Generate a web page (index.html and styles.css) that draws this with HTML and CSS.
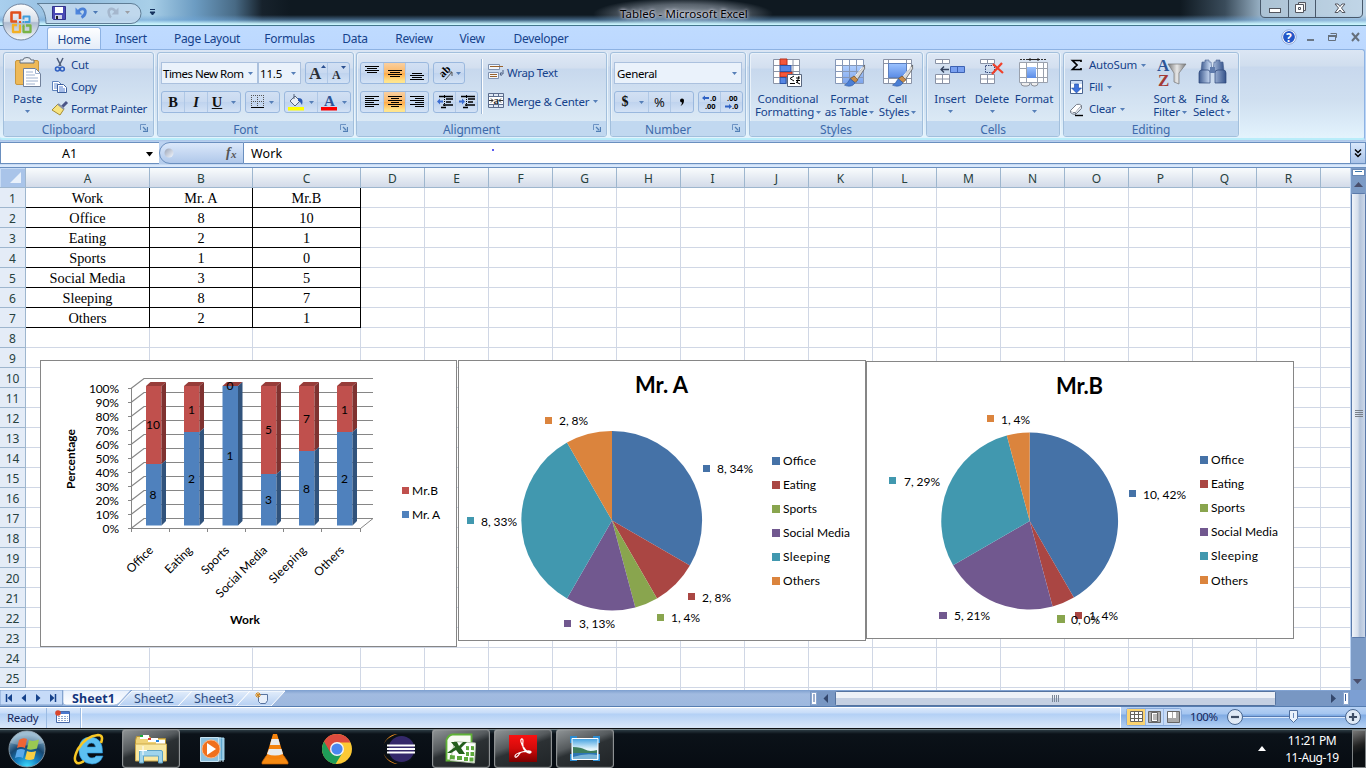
FILE: index.html
```html
<!DOCTYPE html>
<html lang="en">
<head>
<meta charset="utf-8">
<title>Table6 - Microsoft Excel</title>
<link rel="stylesheet" href="styles.css">
</head>
<body>
<svg width="0" height="0" class="defs">
  <defs>
    <linearGradient id="orb" x1="0" y1="0" x2="0" y2="1"><stop offset="0" stop-color="#fff"/><stop offset=".48" stop-color="#d5dde8"/><stop offset=".52" stop-color="#aebbd0"/><stop offset="1" stop-color="#f8fafc"/></linearGradient>
    <radialGradient id="start" cx=".5" cy="1" r=".9"><stop offset="0" stop-color="#3fe0ff"/><stop offset=".35" stop-color="#1682c4"/><stop offset=".65" stop-color="#174770"/><stop offset="1" stop-color="#7fa9c4"/></radialGradient>
    <linearGradient id="hole" x1="0" y1="0" x2="1" y2="1"><stop offset="0" stop-color="#9aa3b5"/><stop offset="1" stop-color="#f4f8ff"/></linearGradient>
    <linearGradient id="blue3" x1="0" y1="0" x2="0" y2="1"><stop offset="0" stop-color="#9cc3ff"/><stop offset="1" stop-color="#5b8ce6"/></linearGradient>
    <linearGradient id="metal" x1="0" y1="0" x2="1" y2="0"><stop offset="0" stop-color="#777"/><stop offset=".5" stop-color="#e8e8e8"/><stop offset="1" stop-color="#777"/></linearGradient>
    <linearGradient id="bino" x1="0" y1="0" x2="1" y2="0"><stop offset="0" stop-color="#3e5b8f"/><stop offset=".4" stop-color="#c6d8f2"/><stop offset="1" stop-color="#34528a"/></linearGradient>
    <linearGradient id="thumb" x1="0" y1="0" x2="1" y2="0"><stop offset="0" stop-color="#f2f5fa"/><stop offset=".45" stop-color="#d5deeb"/><stop offset=".6" stop-color="#b4c4db"/><stop offset="1" stop-color="#cfdaea"/></linearGradient>
    <linearGradient id="pdf" x1="0" y1="0" x2="0" y2="1"><stop offset="0" stop-color="#f81212"/><stop offset=".5" stop-color="#d30a0a"/><stop offset="1" stop-color="#7d0000"/></linearGradient>
    <linearGradient id="sky" x1="0" y1="0" x2="0" y2="1"><stop offset="0" stop-color="#3f9fe0"/><stop offset=".5" stop-color="#e2f4fb"/></linearGradient>
    <linearGradient id="tabw" x1="0" y1="0" x2="0" y2="1"><stop offset="0" stop-color="#e8f0fc"/><stop offset="1" stop-color="#fff"/></linearGradient>
    <linearGradient id="tabb" x1="0" y1="0" x2="0" y2="1"><stop offset="0" stop-color="#e2edfb"/><stop offset="1" stop-color="#b5cff2"/></linearGradient>
    <symbol id="dd" viewBox="0 0 5 3"><path d="M0 0h5L2.500 3z"/></symbol>
    <symbol id="launch" viewBox="0 0 8 8"><path d="M.5 6V.5H6" fill="none" stroke="#6d93c4"/><path d="M3 3l3 3M7.500 3v4.500H3" fill="none" stroke="#527fb5" stroke-width="1.300"/></symbol>
    <symbol id="brush" viewBox="0 0 22 24"><path d="M21 1L10 14l3 3L21 5z" fill="#d9d9d9" stroke="#555" stroke-width=".8"/><path d="M19 3L11 13" stroke="#fff"/><path d="M10 12.500l4 4-3 3-5-4z" fill="#c98d4b" stroke="#6b4a20" stroke-width=".7"/><path d="M6 15.500l5 4c-2 4-7 4.500-11 2.500 3-1 4-4 6-6.500z" fill="#4c7fd4" stroke="#2d579f" stroke-width=".6"/></symbol>
  </defs>
</svg>

<div class="window">
  <header class="titlebar">
    <svg class="qat" width="170" height="25" viewBox="0 0 170 25">
      <path d="M37 3.500H131a10 10 0 0 1 0 20H46C46 13 42 6 37 3.500z" fill="#c9dcef" fill-opacity=".75" stroke="#5f7d96"/>
      <path d="M52.500 6.500h13v13h-12l-1-1z" fill="#4a49b5" stroke="#33338c"/><path d="M55 7h8v6h-8z" fill="#fff"/><path d="M55 15h7v4h-7z" fill="#cfd2e8"/><path d="M56 16h2v3h-2z" fill="#222"/>
      <path d="M75.500 7.500v7h7z" fill="#4f86dd"/><path d="M78 12c3-5 8-3.500 7.300.500-.3 2.500-2 4-3.800 5" fill="none" stroke="#4b80d6" stroke-width="2.800"/>
      <path d="M118.500 7.500v7h-7z" fill="#a5b7cd"/><path d="M116 12c-3-5-8-3.500-7.300.500.3 2.500 1 4 2.300 5" fill="none" stroke="#a5b7cd" stroke-width="2.600"/>
      <path d="M93 11h5l-2.500 3z" fill="#4d79b5"/><path d="M125 11h5l-2.500 3z" fill="#9c9ea4"/>
      <path d="M150 9.500h5M150 12h5l-2.500 3z" stroke="#16335e" fill="#16335e"/>
    </svg>
    <h1 class="caption">Table6 - Microsoft Excel</h1>
    <svg class="winbtns" width="106" height="19" viewBox="0 0 106 19">
      <path d="M.5 0v13q0 4.500 4.500 4.500h93q4.500 0 4.500-4.500V0M28.500 0v17M55.500 0v17" fill="#cbdcea" fill-opacity=".35" stroke="#48586a"/>
      <rect x="9.500" y="8.500" width="11" height="4" fill="#fff" stroke="#52555e"/>
      <path d="M38.500 2.500h7v8h-7z" fill="#eee" stroke="#52555e"/><path d="M35.500 4.500h8v8h-8zM38.500 7.500h2v2h-2z" fill="#fff" stroke="#52555e"/>
      <path d="M75 4h3l2 2.500L82 4h3l-3.500 4L85 12.500h-3L80 10l-2 2.500h-3L78.500 8z" fill="#fff" stroke="#52555e"/>
    </svg>
    <svg class="office" width="38" height="38" viewBox="2 3 38 38">
      <circle cx="21" cy="22" r="18" fill="url(#orb)" stroke="#72859f"/>
      <g fill="none" stroke-width="2.600" stroke-linejoin="round"><path d="M20 19v-6.500h-8.500v9H17" stroke="#e0501c"/><path d="M23.500 19.500v-3h6v5.500H25" stroke="#3f9ddb" stroke-width="2"/><path d="M20 26v6h-7v-7h4" stroke="#f3b024" stroke-width="2.300"/><path d="M23.500 26v6h7v-6.500H26" stroke="#79b446" stroke-width="2.300"/></g>
      <path d="M19 21h2v2h-2z" fill="#e0501c"/><path d="M22.500 21h2v2h-2z" fill="#3f9ddb"/><path d="M19 24.500h2v2h-2z" fill="#f3b024"/><path d="M22.500 24.500h2v2h-2z" fill="#79b446"/>
    </svg>
  </header>

  <nav class="tabs">
    <span class="tab t-home">Home</span><span class="tab t-ins">Insert</span><span class="tab t-page">Page Layout</span><span class="tab t-form">Formulas</span><span class="tab t-data">Data</span><span class="tab t-rev">Review</span><span class="tab t-view">View</span><span class="tab t-dev">Developer</span>
    <svg class="docbtns" width="84" height="20" viewBox="1282 28 84 20">
      <circle cx="1289" cy="37" r="6.500" fill="#2456c8" stroke="#fff" stroke-width="1.200"/><circle cx="1289" cy="37" r="7.200" fill="none" stroke="#6e86bd" stroke-width=".6"/><text x="1286" y="41.500" class="helpq">?</text>
      <path d="M1307 40h7" stroke="#6b7785" stroke-width="2"/><path d="M1330.500 33.500h6v4h-1M1328.500 35.500h7v5h-7z" fill="none" stroke="#66707c"/><path d="M1328 36h8" stroke="#66707c" stroke-width="2"/>
      <path d="M1352 33l7 8M1359 33l-7 8" stroke="#66707c" stroke-width="2"/>
    </svg>
  </nav>

  <section class="ribbon">
    <div class="group g-clip">
      <div class="body">
        <div class="big paste">
          <svg width="28" height="31" viewBox="14 56 28 31"><rect x="15.500" y="60.500" width="23" height="24" rx="1.500" fill="#eeb958" stroke="#c9973e"/><path d="M20 63v-3h3q0-2.500 4-2.500t4 2.500h3v3z" fill="#e7ebf0" stroke="#65707e"/><path d="M23.500 68.500h12l5 5v13h-17z" fill="#fff" stroke="#71819b"/><path d="M35.500 68.500v5h5M26 72h7M26 75h9M26 78h12M26 81h12M26 84h9" fill="none" stroke="#9fb2cf"/></svg>
          <span>Paste</span><svg class="dd" width="5" height="3"><use href="#dd"/></svg>
        </div>
        <div class="stack">
          <div class="cmd"><svg width="16" height="16" viewBox="52 57 16 16"><path d="M57 58l4 8M63 58l-4 8" stroke="#4d5c78" stroke-width="1.500"/><circle cx="57.500" cy="69" r="2" fill="none" stroke="#2f5fc0" stroke-width="1.600"/><circle cx="62.300" cy="69" r="2" fill="none" stroke="#2f5fc0" stroke-width="1.600"/></svg><span>Cut</span></div>
          <div class="cmd"><svg width="16" height="16" viewBox="52 79 16 16"><path d="M52.500 81.500h6l3 3v6h-9z" fill="#fff" stroke="#5d82bd"/><path d="M54 84h4M54 86h5M54 88h4" stroke="#6a92d4"/><path d="M57.500 84.500h6l3 3v5h-9z" fill="#fff" stroke="#3c5f9d"/><path d="M59 87h4M59 89h6M59 91h6" stroke="#4c7ad0"/></svg><span>Copy</span></div>
          <div class="cmd"><svg width="16" height="16" viewBox="52 101 16 16"><path d="M67 102l-6 6" stroke="#4a5587" stroke-width="3"/><path d="M58 104l6 5-4 6-8-5z" fill="#f7e480" stroke="#a78d32"/><path d="M58 104l6 5" stroke="#8992a8" stroke-width="2"/></svg><span>Format Painter</span></div>
        </div>
      </div>
      <footer><span>Clipboard</span><svg class="la" width="8" height="8"><use href="#launch"/></svg></footer>
    </div>

    <div class="group g-font">
      <div class="body rows">
        <div class="row">
          <div class="combo c-font">Times New Rom<svg class="dd" width="5" height="3"><use href="#dd"/></svg></div><div class="combo c-size">11.5<svg class="dd" width="5" height="3"><use href="#dd"/></svg></div>
          <div class="seg s-grow"><i><svg width="20" height="20" viewBox="0 0 20 20"><text x="2" y="16" class="serif b16">A</text><path d="M14 5l2.500-3L19 5z" fill="#2a4f90"/></svg></i><i><svg width="20" height="20" viewBox="0 0 20 20"><text x="3" y="16" class="serif b12">A</text><path d="M12 3h5l-2.500 3z" fill="#2a4f90"/></svg></i></div>
        </div>
        <div class="row">
          <div class="seg s-biu"><i class="serif bold">B</i><i class="serif ital">I</i><i class="serif"><u>U</u><svg class="dd" width="5" height="3"><use href="#dd"/></svg></i></div>
          <div class="seg s-bord"><i><svg width="14" height="14" viewBox="0 0 14 14"><path d="M.5 0v11M6.500 0v11M12.500 0v11M0 .5h13M0 6.500h13" fill="none" stroke="#555" stroke-dasharray="1 1"/><path d="M0 12.500h13" stroke="#000"/></svg><svg class="dd" width="5" height="3"><use href="#dd"/></svg></i></div>
          <div class="seg s-col">
            <i><svg width="17" height="17" viewBox="0 0 17 17"><path d="M2 7l5-5 5 5-5 5z" fill="#e9eef6" stroke="#56657e"/><path d="M6 0v5" stroke="#56657e"/><path d="M10 4c5 0 5 3 4 7-2-3-2-4-4-4z" fill="#2c59b0"/><path d="M0 13h16v3.500H0z" fill="#ff0"/></svg><svg class="dd" width="5" height="3"><use href="#dd"/></svg></i>
            <i><svg width="17" height="17" viewBox="0 0 17 17"><text x="3" y="12" class="serif b15 blue">A</text><path d="M0 13h16v3.500H0z" fill="#f00"/></svg><svg class="dd" width="5" height="3"><use href="#dd"/></svg></i>
          </div>
        </div>
      </div>
      <footer><span>Font</span><svg class="la" width="8" height="8"><use href="#launch"/></svg></footer>
    </div>

    <div class="group g-align">
      <div class="body">
        <div class="alignl">
          <div class="row">
            <div class="seg s-3"><i><svg width="14" height="14"><path d="M0 .5h14M2 2.500h10M0 4.500h14M2 6.500h10" stroke="#000"/></svg></i><i class="on"><svg width="14" height="14"><path d="M0 4.500h14M2 6.500h10M0 8.500h14M2 10.500h10" stroke="#000"/></svg></i><i><svg width="14" height="14"><path d="M2 7.500h10M0 9.500h14M2 11.500h10M0 13.500h14" stroke="#000"/></svg></i></div>
            <div class="seg s-ori"><i><svg width="17" height="16" viewBox="0 0 17 16"><text transform="translate(5 13) rotate(-45)" class="ori">ab</text><path d="M7 15l7-8m-4 0h4v4" stroke="#555" fill="none"/></svg><svg class="dd" width="5" height="3"><use href="#dd"/></svg></i></div>
          </div>
          <div class="row">
            <div class="seg s-3"><i><svg width="14" height="14"><path d="M0 1.500h14M0 3.500h9M0 5.500h14M0 7.500h9M0 9.500h14M0 11.500h9" stroke="#000"/></svg></i><i class="on"><svg width="14" height="14"><path d="M0 1.500h14M3 3.500h8M0 5.500h14M3 7.500h8M0 9.500h14M3 11.500h8" stroke="#000"/></svg></i><i><svg width="14" height="14"><path d="M0 1.500h14M5 3.500h9M0 5.500h14M5 7.500h9M0 9.500h14M5 11.500h9" stroke="#000"/></svg></i></div>
            <div class="seg s-2"><i><svg width="16" height="14"><path d="M2 1.500h14M9 4h7M9 7h5M6 10h10M4 12.500h5" stroke="#000" stroke-width="1.400"/><path d="M7.500 0v14" stroke="#000" stroke-dasharray="1 1"/><path d="M0 6.500l3-3v2h3v2H3v2z" fill="#3c6cd0"/></svg></i><i><svg width="16" height="14"><path d="M2 1.500h14M9 4h7M9 7h5M6 10h10M4 12.500h5" stroke="#000" stroke-width="1.400"/><path d="M7.500 0v14" stroke="#000" stroke-dasharray="1 1"/><path d="M6 6.500l-3-3v2H0v2h3v2z" fill="#3c6cd0"/></svg></i></div>
          </div>
        </div>
        <div class="sep"></div>
        <div class="alignr">
          <div class="cmd"><svg width="16" height="16" viewBox="0 0 16 16"><path d="M.5.5h11v5H.5zM.5 8.500h10v6H.5z" fill="#f3f6fb" stroke="#8193b0"/><path d="M2 2.500h13M2 10.500h7M2 12.500h7" stroke="#99622b"/><path d="M15 6v4h-3m1.500-2L12 10l1.500 2" fill="none" stroke="#4a5c80"/></svg><span>Wrap Text</span></div>
          <div class="cmd"><svg width="16" height="16" viewBox="0 0 16 16"><path d="M.5.5h15v14H.5zM5.500.5v3M10.500.5v3M5.500 11.500v3M10.500 11.500v3M0 3.500h16M0 11.500h16" fill="#dfe8f5" stroke="#5c6d8d"/><path d="M1 4h14v7H1z" fill="#fff"/><text x="5.500" y="10.500" class="serif b11">a</text><path d="M1 7.500h4M3 5.500l2 2-2 2M15 7.500h-4M13 5.500l-2 2 2 2" fill="none" stroke="#333"/></svg><span class="merge">Merge &amp; Center</span><svg class="dd" width="5" height="3"><use href="#dd"/></svg></div>
        </div>
      </div>
      <footer><span>Alignment</span><svg class="la" width="8" height="8"><use href="#launch"/></svg></footer>
    </div>

    <div class="group g-num">
      <div class="body rows">
        <div class="row"><div class="combo c-gen">General<svg class="dd" width="5" height="3"><use href="#dd"/></svg></div></div>
        <div class="row">
          <div class="seg s-cur"><i class="dollar">$<svg class="dd" width="5" height="3"><use href="#dd"/></svg></i><i class="pct">%</i><i class="comma"><svg width="6" height="9"><path d="M1 2.500a2 2 0 0 1 4 0Q5 6 1.500 8q1.500-2 1.500-3.500-2 0-2-2z"/></svg></i></div>
          <div class="seg s-dec"><i><svg width="18" height="18" viewBox="0 0 18 18"><path d="M1 5l3-2.500V4h4v2H4v1.500z" fill="#2f62c4"/><text x="9" y="8" class="dec">.0</text><text x="4" y="16" class="dec">.00</text></svg></i><i><svg width="18" height="18" viewBox="0 0 18 18"><path d="M9 13.500L6 11v1.500H2v2h4V16z" fill="#2f62c4"/><text x="4" y="8" class="dec">.00</text><text x="9" y="16" class="dec">.0</text></svg></i></div>
        </div>
      </div>
      <footer><span>Number</span><svg class="la" width="8" height="8"><use href="#launch"/></svg></footer>
    </div>

    <div class="group g-styles">
      <div class="body bigs">
        <div class="big w76"><svg width="32" height="30" viewBox="0 0 32 30"><path d="M1.500 1.500h26v24h-26zM1 7.500h27M1 13.500h27M1 19.500h27M8.500 1v25M14.500 1v25M21 1v25" fill="#fff" stroke="#8a93a6"/><path d="M8 1h7v6H8zM8 14h12v5H8z" fill="#f4573b" stroke="#b8301c"/><path d="M8 7.500h11v6H8zM8 19.500h6v6H8z" fill="#5687e5" stroke="#2b55ab"/><path d="M15.500 16.500h14v12h-14z" fill="#fff" stroke="#59677f"/><path d="M22 18l-4 2.500 4 2.500M18 25.500h5M24 20h4M24 22.500h4M27 18l-2 7M24 24l4 2" fill="none" stroke="#000"/></svg><span>Conditional<br>Formatting <svg class="dd" width="5" height="3"><use href="#dd"/></svg></span></div>
        <div class="big w56"><svg width="32" height="30" viewBox="0 0 32 30"><path d="M1.500 1.500h28v24h-28z" fill="#fff"/><path d="M8.500 7.500h21v18h-21z" fill="url(#blue3)" fill-opacity=".8"/><path d="M1.500 1.500h28v24h-28zM1 7.500h29M1 13.500h29M1 19.500h29M8.500 1v25M15.500 1v25M22.500 1v25" fill="none" stroke="#8698b8"/><use href="#brush" x="10" y="6" width="22" height="23"/></svg><span>Format<br>as Table <svg class="dd" width="5" height="3"><use href="#dd"/></svg></span></div>
        <div class="big w42"><svg width="32" height="30" viewBox="0 0 32 30"><path d="M1.500 1.500h28v24h-28zM1 5.500h29M1 20.500h29M6.500 1v25M24.500 1v25" fill="#fff" stroke="#8a93a6"/><path d="M6.500 5.500h18v14h-18z" fill="url(#blue3)" stroke="#5b7fc0"/><use href="#brush" x="10" y="6" width="22" height="23"/></svg><span>Cell<br>Styles <svg class="dd" width="5" height="3"><use href="#dd"/></svg></span></div>
      </div>
      <footer><span>Styles</span></footer>
    </div>

    <div class="group g-cells">
      <div class="body bigs">
        <div class="big w42"><svg width="32" height="30" viewBox="0 0 32 30"><path d="M1.500 1.500h14v4h-14zM8.500 1v4.500M1.500 16.500h14v9h-14zM8.500 16.500v9M1 21h15" fill="#fff" stroke="#8a93a6"/><path d="M16.500 8.500h14v6h-14zM23.500 8.500v6" fill="#79a0f0" stroke="#3d62b3"/><path d="M15 11.500H7M10 8.500l-3 3 3 3" fill="none" stroke="#33415c" stroke-width="1.300"/></svg><span>Insert</span><svg class="dd" width="5" height="3"><use href="#dd"/></svg></div>
        <div class="big w42"><svg width="32" height="30" viewBox="0 0 32 30"><path d="M4.500 1.500h14v4h-14zM11.500 1v4.500M4.500 16.500h14v9h-14zM11.500 16.500v9M4 21h15" fill="#fff" stroke="#8a93a6"/><path d="M9.500 7.500h9v7h-9z" fill="none" stroke="#35487a" stroke-dasharray="1.500 1"/><path d="M17 6l10 9M26 5L16 16" stroke="#f0412a" stroke-width="2.200"/></svg><span>Delete</span><svg class="dd" width="5" height="3"><use href="#dd"/></svg></div>
        <div class="big w42"><svg width="32" height="30" viewBox="0 0 32 30"><path d="M2 1.500h26" stroke="#333" stroke-dasharray="2 1"/><path d="M10 1.500h12M12 0v3M20 0v3" stroke="#222"/><path d="M1.500 4.500h28v20h-28zM1 10.500h29M1 19.500h29M8.500 5v19M19.500 5v19M25.500 5v19" fill="#fff" stroke="#9aa1ad"/><path d="M9 9h9v11H9z" fill="url(#blue3)"/><path d="M3 25q0 3 3 3h3q3 0 3-3M13 25q0 3 3 3h1q3 0 3-3" fill="#eee" stroke="#8b8f98"/></svg><span>Format</span><svg class="dd" width="5" height="3"><use href="#dd"/></svg></div>
      </div>
      <footer><span>Cells</span></footer>
    </div>

    <div class="group g-edit">
      <div class="body">
        <div class="stack">
          <div class="cmd"><svg width="16" height="16"><path d="M12 5V3.500H3.500L8 8l-4.500 4.500H12V11" fill="none" stroke="#000" stroke-width="1.700"/></svg><span>AutoSum</span><svg class="dd" width="5" height="3"><use href="#dd"/></svg></div>
          <div class="cmd"><svg width="16" height="16"><path d="M1.500 1.500h12v13h-12z" fill="#fff" stroke="#47628f"/><path d="M2 2h11v3H2z" fill="#cbdcf4"/><path d="M5.500 5h4v4h3l-5 5-5-5h3z" fill="#3c71dc" stroke="#1d4aa3" stroke-width=".6"/></svg><span>Fill</span><svg class="dd" width="5" height="3"><use href="#dd"/></svg></div>
          <div class="cmd"><svg width="16" height="16"><path d="M1.500 9.500l6-6q3-1 5 1l-6 7q-3 1-5-2z" fill="#fff" stroke="#777f8c"/><path d="M12.500 4.500v3l-6 6v-2M1.500 9.500v2q2 2 5 2" fill="#dfe3ea" stroke="#777f8c"/><path d="M6 14.500h8" stroke="#000" stroke-width="1.400"/></svg><span>Clear</span><svg class="dd" width="5" height="3"><use href="#dd"/></svg></div>
        </div>
        <div class="big w42 sort"><svg width="32" height="30" viewBox="0 0 32 30"><text x="3" y="13" class="serif az blue">A</text><text x="4" y="28" class="serif az red">Z</text><path d="M14 6h18l-7 9v11l-5-2v-9z" fill="url(#metal)" stroke="#777" stroke-width=".7"/></svg><span>Sort &amp;<br>Filter <svg class="dd" width="5" height="3"><use href="#dd"/></svg></span></div>
        <div class="big w42 find"><svg width="32" height="30" viewBox="0 0 32 30"><path d="M6 4h3V2h4v2h2l1 9H5zM18 4h2V2h4v2h3l1 9H17z" fill="url(#bino)" stroke="#4a6390" stroke-width=".6"/><path d="M3 15q0-3 3-3h6q2 0 2 3v10H3zM19 15q0-3 3-3h5q3 0 3 3v10H19z" fill="url(#bino)" stroke="#2b4678" stroke-width=".7"/><path d="M14 9h5v6h-5z" fill="#5e7bac"/></svg><span>Find &amp;<br>Select <svg class="dd" width="5" height="3"><use href="#dd"/></svg></span></div>
      </div>
      <footer><span>Editing</span></footer>
    </div>
  </section>

  <section class="formula">
    <div class="namebox"><span>A1</span><svg class="ndd" width="8" height="5"><path d="M0 0h7L3.500 4.500z"/></svg></div>
    <div class="fx"><svg width="83" height="20" viewBox="0 0 83 20"><circle cx="9" cy="10" r="4.500" fill="url(#hole)"/><text x="66" y="14" class="fxt">f</text><text x="71" y="14.500" class="fxs">x</text></svg></div>
    <div class="finput"><span>Work</span><i class="speck"></i></div>
    <div class="expand"><svg width="9" height="9"><path d="M1 .5l3 3 3-3M1 4.500l3 3 3-3" fill="none" stroke="#000" stroke-width="1.500"/></svg></div>
  </section>

  <main class="sheet">
    <div class="rowheads"><b class="corner"><svg width="25" height="19"><path d="M21 4v11H10z" fill="#e9f1fb"/><path d="M.5 19V.5H25" fill="none" stroke="#c8dcf5"/></svg></b><b>1</b><b>2</b><b>3</b><b>4</b><b>5</b><b>6</b><b>7</b><b>8</b><b>9</b><b>10</b><b>11</b><b>12</b><b>13</b><b>14</b><b>15</b><b>16</b><b>17</b><b>18</b><b>19</b><b>20</b><b>21</b><b>22</b><b>23</b><b>24</b><b>25</b></div>
    <div class="cells">
      <div class="colheads"><b>A</b><b>B</b><b>C</b><b>D</b><b>E</b><b>F</b><b>G</b><b>H</b><b>I</b><b>J</b><b>K</b><b>L</b><b>M</b><b>N</b><b>O</b><b>P</b><b>Q</b><b>R</b><b></b></div>
      <div class="gridarea">
        <div class="left">
          <table class="data">
            <tr><td>Work</td><td>Mr. A</td><td>Mr.B</td></tr>
            <tr><td>Office</td><td>8</td><td>10</td></tr>
            <tr><td>Eating</td><td>2</td><td>1</td></tr>
            <tr><td>Sports</td><td>1</td><td>0</td></tr>
            <tr><td>Social Media</td><td>3</td><td>5</td></tr>
            <tr><td>Sleeping</td><td>8</td><td>7</td></tr>
            <tr><td>Others</td><td>2</td><td>1</td></tr>
          </table>
          <div class="blank"><i></i><i></i><i></i></div>
        </div>
      </div>
    </div>
    <svg class="vscroll" width="16" height="522" viewBox="1350 168 16 522">
      <path d="M1350 168h16v522h-16z" fill="#7c9bc6"/><path d="M1350.500 168v522" stroke="#bcd3f2"/>
      <rect x="1352.500" y="169.500" width="12" height="6" fill="#fff" stroke="#6788b5"/><path d="M1355 171.500h7" stroke="#3e78ab"/>
      <path d="M1354 187l4.500-5 4.500 5z" fill="#4a4f6c"/>
      <rect x="1351.500" y="193.500" width="14" height="444" rx="1" fill="url(#thumb)" stroke="#5b7aaa"/>
      <path d="M1355 410.500h8M1355 412.500h8M1355 414.500h8M1355 416.500h8" stroke="#7a8088"/>
      <path d="M1353 679h9l-4.500 5z" fill="#4a4f6c"/>
    </svg>

    <svg class="chart bar" width="417" height="287" viewBox="40 360 417 287">
      <rect x="40.500" y="360.500" width="416" height="286" fill="#fff" stroke="#868686"/>
      <path d="M131 388.500L144 378.500H373M131 402.500L144 392.500H373M131 416.500L144 406.500H373M131 430.500L144 420.500H373M131 444.500L144 434.500H373M131 458.500L144 448.500H373M131 472.500L144 462.500H373M131 486.500L144 476.500H373M131 500.500L144 490.500H373M131 514.500L144 504.500H373M131 528.500L144 518.500H373" fill="none" stroke="#868686" stroke-width="1.200"/>
      <path d="M131.500 388v144M128 388.500h4M128 402.500h4M128 416.500h4M128 430.500h4M128 444.500h4M128 458.500h4M128 472.500h4M128 486.500h4M128 500.500h4M128 514.500h4M128 528.500H360.500L373 518.500M169.500 528v4M207.500 528v4M245.500 528v4M283.500 528v4M321.500 528v4M360.500 528v4" fill="none" stroke="#868686"/>
      <g class="redf"><path d="M146 386h15.500v78H146zM184 386h15.500v46H184zM261 386h15.500v88H261zM299 386h15.500v65H299zM337 386h15.500v46H337z"/></g>
      <g class="bluef"><path d="M146 464h15.500v61.500H146zM184 432h15.500v93.500H184zM222.500 386H238v139.500h-15.500zM261 474h15.500v51.500H261zM299 451h15.500v74.500H299zM337 432h15.500v93.500H337z"/></g>
      <g fill="#973c39"><path d="M146 386l4.500-4h15.500l-4.500 4zM184 386l4.500-4H204l-4.500 4zM222.500 386l4.500-4h15.500l-4.500 4zM261 386l4.500-4H281l-4.500 4zM299 386l4.500-4H319l-4.500 4zM337 386l4.500-4H357l-4.500 4z"/></g>
      <g fill="#7f3230"><path d="M161.500 386l4.500-4v78l-4.500 4zM199.500 386l4.500-4v46l-4.500 4zM276.500 386l4.500-4v88l-4.500 4zM314.500 386l4.500-4v65l-4.500 4zM352.500 386l4.500-4v46l-4.500 4z"/></g>
      <g fill="#31537c"><path d="M161.500 464l4.500-4v61l-4.500 4.500zM199.500 432l4.500-4v93l-4.500 4.500zM238 386l4.500-4v139l-4.500 4.500zM276.500 474l4.500-4v51l-4.500 4.500zM314.500 451l4.500-4v74l-4.500 4.500zM352.500 432l4.500-4v93l-4.500 4.500z"/></g>
      <g class="mid"><text x="153" y="429">10</text><text x="153" y="499">8</text><text x="191.500" y="414">1</text><text x="191.500" y="483">2</text><text x="230" y="390">0</text><text x="230" y="460">1</text><text x="268.500" y="434">5</text><text x="268.500" y="504">3</text><text x="306.500" y="423">7</text><text x="306.500" y="493">8</text><text x="344.500" y="414">1</text><text x="344.500" y="483">2</text></g>
      <g class="end"><text x="119" y="393" textLength="30">100%</text><text x="119" y="407">90%</text><text x="119" y="421">80%</text><text x="119" y="435">70%</text><text x="119" y="449">60%</text><text x="119" y="463">50%</text><text x="119" y="477">40%</text><text x="119" y="491">30%</text><text x="119" y="505">20%</text><text x="119" y="519">10%</text><text x="119" y="533">0%</text></g>
      <g class="end"><text transform="translate(154 551) rotate(-45)" textLength="32">Office</text><text transform="translate(193 551) rotate(-45)" textLength="33">Eating</text><text transform="translate(230 551) rotate(-45)" textLength="34">Sports</text><text transform="translate(268 551) rotate(-45)" textLength="67">Social Media</text><text transform="translate(307 551) rotate(-45)" textLength="47">Sleeping</text><text transform="translate(345 551) rotate(-45)" textLength="37">Others</text></g>
      <text class="axis" transform="translate(75 489) rotate(-90)" textLength="60">Percentage</text>
      <text class="axis" x="230" y="624" textLength="30">Work</text>
      <path class="redf" d="M402 487h7v7h-7z"/><path class="bluef" d="M402 511h7v7h-7z"/>
      <text x="412" y="495" textLength="26">Mr.B</text><text x="412" y="519" textLength="28">Mr. A</text>
    </svg>

    <svg class="chart piea" width="408" height="281" viewBox="458 360 408 281">
      <rect x="458.500" y="360.500" width="407" height="280" fill="#fff" stroke="#868686"/>
      <text class="ctitle" x="635" y="393" textLength="53">Mr. A</text>
      <path class="c1" d="M612 520.500V431A90 89.500 0 0 1 689.900 565.500z"/><path class="c2" d="M612 520.500l77.900 45A90 89.500 0 0 1 657 598.400z"/><path class="c3" d="M612 520.500l45 77.900A90 89.500 0 0 1 635.300 607.400z"/><path class="c4" d="M612 520.500l23.300 86.900A90 89.500 0 0 1 567 598.400z"/><path class="c5" d="M612 520.500l-45 77.900A90 89.500 0 0 1 567 442.600z"/><path class="c6" d="M612 520.500l-45-77.900A90 89.500 0 0 1 612 431z"/>
      <path class="c1" d="M703 465h7v7h-7zM772 457h8v8h-8z"/><path class="c2" d="M688 593h7v7h-7zM772 481h8v8h-8z"/><path class="c3" d="M657 614h7v7h-7zM772 505h8v8h-8z"/><path class="c4" d="M564 620h7v7h-7zM772 529h8v8h-8z"/><path class="c5" d="M467 517h7v7h-7zM772 553h8v8h-8z"/><path class="c6" d="M545 417h7v7h-7zM772 577h8v8h-8z"/>
      <text x="717" y="473" textLength="36">8, 34%</text><text x="702" y="602" textLength="29">2, 8%</text><text x="671" y="622" textLength="29">1, 4%</text><text x="579" y="628" textLength="36">3, 13%</text><text x="481" y="526" textLength="36">8, 33%</text><text x="559" y="425" textLength="29">2, 8%</text>
      <text x="783" y="465" textLength="33">Office</text><text x="783" y="489" textLength="33">Eating</text><text x="783" y="513" textLength="34">Sports</text><text x="783" y="537" textLength="67">Social Media</text><text x="783" y="561" textLength="47">Sleeping</text><text x="783" y="585" textLength="37">Others</text>
    </svg>

    <svg class="chart pieb" width="428" height="278" viewBox="866 361 428 278">
      <rect x="866.500" y="361.500" width="427" height="277" fill="#fff" stroke="#868686"/>
      <text class="ctitle" x="1056" y="394" textLength="47">Mr.B</text>
      <path class="c1" d="M1029.700 521V432.500A88.500 88.500 0 0 1 1073.900 597.600z"/><path class="c2" d="M1029.700 521l44.200 76.600A88.500 88.500 0 0 1 1052.600 606.500z"/><path class="c4" d="M1029.700 521l22.900 85.500A88.500 88.500 0 0 1 953.100 565.200z"/><path class="c5" d="M1029.700 521l-76.600 44.200A88.500 88.500 0 0 1 1006.800 435.500z"/><path class="c6" d="M1029.700 521l-22.900-85.500A88.500 88.500 0 0 1 1029.700 432.500z"/>
      <path class="c1" d="M1129 490h7v7h-7zM1200 456h8v8h-8z"/><path class="c2" d="M1075 612h7v7h-7zM1200 480h8v8h-8z"/><path class="c3" d="M1057 615h8v8h-8zM1200 504h8v8h-8z"/><path class="c4" d="M939 612h8v7h-8zM1200 528h8v8h-8z"/><path class="c5" d="M889 477h7v7h-7zM1200 552h8v8h-8z"/><path class="c6" d="M987 415h7v7h-7zM1200 576h8v8h-8z"/>
      <text x="1143" y="499" textLength="43">10, 42%</text><text x="1089" y="620" textLength="29">1, 4%</text><text x="1071" y="624" textLength="29">0, 0%</text><text x="954" y="620" textLength="36">5, 21%</text><text x="904" y="486" textLength="36">7, 29%</text><text x="1001" y="424" textLength="29">1, 4%</text>
      <text x="1211" y="464" textLength="33">Office</text><text x="1211" y="488" textLength="33">Eating</text><text x="1211" y="512" textLength="34">Sports</text><text x="1211" y="536" textLength="67">Social Media</text><text x="1211" y="560" textLength="47">Sleeping</text><text x="1211" y="585" textLength="37">Others</text>
    </svg>
  </main>

  <section class="sheetbar">
    <svg width="290" height="16" viewBox="0 690 290 16">
      <path d="M0 690h62.500v15H0z" fill="#c6dbf8" stroke="#7d9dcb"/>
      <path d="M6 694v8M55 694v8" transform="translate(.5)" stroke="#15428b" stroke-width="1.500"/><path d="M12 694v8l-4.500-4zM26 694v8l-4.500-4zM36 694v8l4.500-4zM50 694v8l4.500-4z" fill="#15428b"/>
      <path d="M236 706l14-15h35l-14 15z" fill="url(#tabb)" stroke="#fff"/><path d="M178 706l14-15h58l-14 15z" fill="url(#tabb)" stroke="#fff"/><path d="M118 706l14-15h60l-14 15z" fill="url(#tabb)" stroke="#fff"/>
      <path d="M63 690h68l-12 13q-2 2-5 2H66q-3 0-3-3z" fill="url(#tabw)" stroke="#90afd8" stroke-width=".7"/>
      <text class="st act" x="72" y="703" textLength="43">Sheet1</text><text class="st" x="134" y="703" textLength="40">Sheet2</text><text class="st" x="194" y="703" textLength="40">Sheet3</text>
      <path d="M258.500 694.500h9v6l-2 3h-5l-2-2z" fill="#e8effa" stroke="#5874a0"/><path d="M258 692v6M255 695h6M256 693l4 4M260 693l-4 4" stroke="#d98c1c"/>
    </svg>
    <svg class="hscroll" width="556" height="16" viewBox="810 690 556 16">
      <path d="M810 691h556v15H810z" fill="#7897c3"/><path d="M811.500 692.500h5v12h-5z" fill="#fff" stroke="#8ba7cf"/><path d="M814 694v8" stroke="#3e619b"/>
      <path d="M828 694v9l-4.500-4.500z" fill="#33476c"/>
      <rect x="835.500" y="691.500" width="440" height="14" rx="1" fill="#c5d0e2" stroke="#55739f"/><path d="M836 692h439v6H836z" fill="#edf1f7"/>
      <path d="M1052.500 695v7M1054.500 695v7M1056.500 695v7M1058.500 695v7" stroke="#7a8798"/>
      <path d="M1331 694v9l5-4.500z" fill="#33476c"/><path d="M1343.500 692.500h5v12h-5z" fill="#fff" stroke="#8ba7cf"/><path d="M1345.500 694v7" stroke="#3e619b"/><path d="M1350 690h16v16h-16z" fill="#7c9fd3"/>
    </svg>
  </section>

  <section class="status">
    <span class="ready">Ready</span>
    <span class="macro"><svg width="16" height="14"><path d="M1.500 1.500h13v11h-13z" fill="#fff" stroke="#4668a8"/><path d="M2 2h12v2H2z" fill="#4a78cf"/><path d="M3 6.500h10M3 8.500h10M3 10.500h10" stroke="#8ea6cf" stroke-dasharray="2 1"/><circle cx="3" cy="3" r="2.800" fill="#d9452b"/></svg></span>
    <svg class="zoom" width="246" height="21" viewBox="1120 707 246 21">
      <path d="M1120.500 707v21" stroke="#fff"/><rect x="1126.500" y="708.500" width="55" height="17" rx="2" fill="#c7dbf6" stroke="#86a8d8"/><path d="M1127 709h18v16h-18z" fill="#fbd471"/><path d="M1145.500 709v16M1163.500 709v16" stroke="#9dbbe5"/>
      <path d="M1130.500 711.500h12v10h-12zM1130 714.500h13M1130 718.500h13M1134.500 711v11M1138.500 711v11" fill="#fff" stroke="#68645d"/>
      <path d="M1148.500 711.500h12v11h-12z" fill="#aaa" stroke="#666"/><path d="M1151.500 712.500h6v9h-6z" fill="#fff" stroke="#666"/><path d="M1153 715h4M1153 717h4M1153 719h4" stroke="#777"/>
      <path d="M1167.500 711.500h12v11h-12z" fill="#aaa" stroke="#666"/><path d="M1168 712h4v6h-4zM1173 712h3v6h-3z" fill="#fff"/>
      <text class="zt" x="1190" y="721" textLength="28">100%</text>
      <path d="M1243 716.500h102" stroke="#567bb3"/><path d="M1243 717.500h102M1293.500 712v10" stroke="#d9e8fc"/>
      <circle cx="1235" cy="717" r="7.500" fill="#dfe9f6" stroke="#47658f"/><path d="M1231 717h8" stroke="#3f4e66" stroke-width="2.200"/>
      <circle cx="1353" cy="717" r="7.500" fill="#dfe9f6" stroke="#47658f"/><path d="M1349 717h8M1353 713v8" stroke="#3f4e66" stroke-width="2.200"/>
      <path d="M1289.500 710.500h8v8l-4 4-4-4z" fill="#e9f1fb" stroke="#4f6f9f"/><path d="M1293.500 713v5" stroke="#6b8ab8"/>
    </svg>
  </section>

  <footer class="taskbar">
    <div class="tb"><svg width="38" height="38" viewBox="8 729 38 38"><circle cx="27" cy="748" r="18" fill="url(#start)" stroke="#8194a2"/><path d="M10 742a18 18 0 0 1 34 0q-17 5-34 0z" fill="#fff" fill-opacity=".25"/><path d="M19 739q4-3 8-1l-2 9q-4-2-8 0z" fill="#ef6534"/><path d="M29 739q4 2 10-.5l-2 9q-6 2-10 .500z" fill="#9ac952"/><path d="M17 749q4-2 8 0l-2 8q-4-2-8 0z" fill="#5aa9ea"/><path d="M27 750q4 2 9 0l-2 8q-5 2-9 0z" fill="#f9cf44"/></svg></div>
    <div class="tb"><svg width="34" height="34" viewBox="72 730 34 34"><path d="M102.500 751H87q1 5 5 5 3 0 4-2h7q-3 8-11 8-13-1-13-14t12-13q12 1 11.500 16zM87 745h8.500q-.5-4-4-4T87 745z" fill="#5cc0f2" stroke="#2694dc" stroke-width=".6"/><path d="M101 741q3-8-3-8-12 1-20 14-5 10-2 13 2 3 8-1" fill="none" stroke="#f7c624" stroke-width="2.600"/></svg></div>
    <div class="tb run"><svg width="36" height="34" viewBox="133 732 36 34"><path d="M135.500 740.500l1-4h13l2 2h14v20h-30z" fill="#f0d377" stroke="#b59537"/><path d="M140 735h9v4h-9z" fill="#fff"/><path d="M140 735h3v2h-3z" fill="#1dad3c"/><path d="M148 738h10v4h-10z" fill="#fff"/><path d="M148 738h3v2h-3z" fill="#d33b32"/><path d="M156 740h9v4h-9z" fill="#fff"/><path d="M156 740h3v2h-3z" fill="#2987e0"/><path d="M135.500 744h31v17h-31z" fill="#f9e8a2" stroke="#cda94a"/><path d="M139.500 763v-11q0-1.500 1.500-1.500h20q1.500 0 1.500 1.500v11h-4v-7h-15v7z" fill="#9fd4ec" stroke="#5fa3c4"/><path d="M143 746v9M139 750.500h8" stroke="#fff"/></svg></div>
    <div class="tb"><svg width="28" height="28" viewBox="198 735 28 28"><path d="M203 738h20v22h-20z" fill="#5fa7cf" stroke="#9bd0ea"/><path d="M219 737v25M222 738v24" stroke="#c4e4f3"/><path d="M199.500 737.500h18v24h-18z" fill="#8ec1de" stroke="#c6e3f2"/><circle cx="210" cy="749" r="9" fill="#f0701d" stroke="#ffb37f"/><path d="M206 743v12l9-6z" fill="#fff"/></svg></div>
    <div class="tb"><svg width="28" height="32" viewBox="261 732 28 32"><path d="M266 755h18l4 6v2h-26v-2z" fill="#f58a13" stroke="#c55e00" stroke-width=".7"/><path d="M273 733h4l7 23q-9 5-18 0z" fill="#f4820c"/><path d="M271.500 738h7l1.500 6h-10zM269 748h12.500l1.500 5q-8 3-16 0z" fill="#e8ebee"/></svg></div>
    <div class="tb"><svg width="32" height="32" viewBox="321 732 32 32"><circle cx="337" cy="748" r="15" fill="#fcc934"/><path d="M324 740.500A15 15 0 0 0 335.500 763L343 751l-6-3z" fill="#1f9d58"/><path d="M324 740.500l6.500 11.300L337 741.500h13.500A15 15 0 0 0 324 740.500z" fill="#dd4b3e"/><circle cx="337" cy="748" r="7" fill="#f5f5f5"/><circle cx="337" cy="748" r="5.600" fill="#4b87ef"/></svg></div>
    <div class="tb"><svg width="36" height="32" viewBox="381 732 36 32"><path d="M398 733a15 15 0 0 0 0 30q-15-4-15-15t15-15z" fill="#f6921e"/><circle cx="401.500" cy="748" r="15" fill="#0a1118"/><circle cx="401.500" cy="748" r="13" fill="#34286a"/><path d="M387 744.500h28M387 748h28M387 751.500h28" stroke="#fff" stroke-width="1.800"/></svg></div>
    <div class="tb run"><svg width="32" height="32" viewBox="445 731 32 32"><path d="M446.500 738q2-5 6-5.500h19v26h-25z" fill="#f7fbf2" stroke="#5fb236" stroke-width="1.800"/><path d="M454.500 739.500l21 1.500-1 20-24-2.500z" fill="#fff" stroke="#b6c6ac"/><path d="M466 744l3 .2v4l-3-.2zM471 744l3 .2v4l-3-.2zM466 750h3v4h-3zM470.500 750h3.500v4h-3.500zM450 753l5 .5-.3 4-5-.5zM457 754h5v4h-5zM464 755h4v4h-4zM469.500 755.500h4v4h-4z" fill="#5da83b"/><path d="M451 740h6l2 4 4-4h4l-6 6 4 6h-6l-3-4-5 3h-4l8-6z" fill="#245e1c"/></svg></div>
    <div class="tb run"><svg width="28" height="28" viewBox="509 733 28 28"><path d="M509 733h28v27h-28z" fill="url(#pdf)"/><path d="M515 754c0-3 16-7 16-4s-10 0-8-11c0-4-3-2-2 1 1 5 7 11 9 11 3-2-8-2-10 0-3 5-5 5-5 3z" fill="none" stroke="#fff" stroke-width="1.200"/></svg></div>
    <div class="tb run"><svg width="32" height="28" viewBox="569 733 32 28"><path d="M570 734h7v7h-7zM593 734h7v7h-7zM570 752h7v7h-7zM593 752h7v7h-7z" fill="#2b8bd0"/><path d="M572 736.500h26v21h-26z" fill="url(#sky)" stroke="#fff"/><path d="M573 745q8 0 12 2.500t12 .5v4h-24z" fill="#3e7d5c"/><path d="M573 751h24v6h-24z" fill="#2d75b4"/><path d="M573 755q12-4 24-2v4h-24z" fill="#7cb5d6"/></svg></div>
    <svg class="tri" width="8" height="5"><path d="M0 5h8L4 0z" fill="#fff"/></svg>
    <div class="clock"><span>11:21 PM</span><span>11-Aug-19</span></div>
    <div class="showdesk"></div>
  </footer>
</div>
</body>
</html>
```
FILE: styles.css
```css
* { box-sizing: border-box; }
body { margin: 0; width: 1366px; height: 768px; overflow: hidden; font: 12px "Noto Sans", "Open Sans", sans-serif; background: #bcd5f5; }
.defs { position: absolute; }
svg { display: block; flex: none; overflow: visible; }
.window { display: flex; flex-direction: column; width: 1366px; height: 768px; }
.dd { fill: #567fb8; display: inline-block; vertical-align: middle; }
.serif { font-family: "Liberation Serif", serif; }
svg .serif { font-weight: bold; fill: #2b3038; }
.b16 { font-size: 17px; } .b15 { font-size: 15px; } .b12 { font-size: 12px; } .b11 { font-size: 11px; }
.az { font-size: 17px; }
svg .blue { fill: #2e5596; } svg .red { fill: #a33a36; }

.titlebar { position: relative; height: 26px; display: flex; align-items: flex-start; border-bottom: 1px solid #43768c;
  background: linear-gradient(to bottom, transparent 15px, rgba(110,165,215,.55) 20px, #c9f3fc 24px),
    radial-gradient(ellipse 90px 16px at 683px 14px, rgba(190,200,210,.75) 0, rgba(150,160,172,.55) 60%, transparent 100%),
    linear-gradient(to right, #a9cfee 0, #91bbdd 70px, #a8cfe8 150px, #6c9cc2 195px, #486a85 235px, #17222c 262px, #0f1921 290px, #0f1921 1180px, #3a4c5b 1225px, #9bb4c8 1262px, #bcd3e6 1366px); }
.office { position: absolute; left: 2px; top: 3px; z-index: 2; }
.caption { margin: 7px 0 0 450px; width: 140px; font-size: 11.500px; line-height: 14px; font-weight: normal; color: #000; white-space: nowrap; letter-spacing: .08px;
  text-shadow: 0 0 3px #eef, 0 0 4px #ccd; }
.winbtns { margin-left: auto; }
.tabs { display: flex; height: 23px; background: linear-gradient(#bfdbff, #bcd8ff); align-items: flex-end; color: #15428b; }
.tab { height: 22px; line-height: 24px; text-align: center; white-space: nowrap; letter-spacing: -.3px; }
.t-home { margin-left: 47px; width: 54px; margin-bottom: -1px; height: 23px; border: 1px solid #8db2e3; border-bottom: 0; border-radius: 3px 3px 0 0; background: linear-gradient(#fdfeff, #e3ecf8); }
.t-ins { margin-left: 3px; width: 54px; } .t-page { margin-left: 10px; width: 78px; } .t-form { margin-left: 9px; width: 69px; }
.t-data { margin-left: 9px; width: 44px; } .t-rev { margin-left: 13px; width: 48px; } .t-view { margin-left: 14px; width: 40px; } .t-dev { margin-left: 19px; width: 60px; }
.docbtns { margin-left: auto; align-self: flex-start; margin-top: 2px; }
.helpq { font: bold 12px "Noto Sans", sans-serif; fill: #fff; }

.ribbon { height: 91px; margin-right: 1px; padding: 2px 0 0 3px; display: flex; align-items: flex-start; border: solid #8db2e3; border-width: 1px 1px 0 0; border-bottom: 2px solid #b8edfa; border-radius: 0 3px 3px 3px;
  background: linear-gradient(#dbe6f4 0, #d0deee 16px, #c8d8ed 17px, #cfdff0 50px, #e3f3fd 88px); }
.group { height: 85px; border: 1px solid #a2bfdc; border-radius: 3px; flex: none; color: #15428b; box-shadow: inset 1px 1px #e9f1f9, 1px 0 #e9f4fc;
  background: linear-gradient(#dee8f5 0, #d3dfef 15px, #c7d8ed 16px, #dbe9f5 68px); }
.g-clip { width: 151px; margin-right: 3px; } .g-font { width: 197px; margin-right: 2px; } .g-align { width: 251px; margin-right: 3px; } .g-num { width: 136px; margin-right: 3px; } .g-styles { width: 174px; margin-right: 3px; } .g-cells { width: 134px; margin-right: 3px; } .g-edit { width: 176px; }
.body { height: 68px; display: flex; }
.group footer { height: 15px; background: #c1d8f0; color: #3e6aaa; text-align: center; line-height: 17px; display: grid; grid-template-columns: 1fr 13px; border-radius: 0 0 2px 2px; letter-spacing: -.15px; }
.group footer > span { margin-right: -9px; padding-right: 16px; }
.g-styles footer, .g-cells footer, .g-edit footer { grid-template-columns: 1fr; }
.g-styles footer > span, .g-cells footer > span, .g-edit footer > span { margin: 0; padding: 0; }
.la { margin-top: 3px; }
.big { display: flex; flex-direction: column; align-items: center; text-align: center; line-height: 13px; white-space: nowrap; font-size: 11.500px; letter-spacing: -.1px; }
.big > span > .dd { margin-left: -1px; }
.paste { width: 46px; padding: 3px 0 0 1px; }
.paste > span { margin-top: 5px; margin-bottom: 5px; }
.stack { display: flex; flex-direction: column; padding-top: 1px; }
.cmd { display: flex; align-items: center; height: 22px; gap: 3px; white-space: nowrap; font-size: 11.500px; letter-spacing: -.35px; }
.merge { letter-spacing: -.25px; margin-right: 1px; }
.g-clip .stack { padding-left: 2px; } .g-clip .cmd, .g-edit .cmd { line-height: 16px; }
.rows { flex-direction: column; gap: 7px; padding: 9px 0 0 3px; }
.row { display: flex; gap: 4px; height: 22px; }
.combo { height: 22px; background: #eaf2fb; border: 1px solid #abc1de; color: #000; display: flex; align-items: center; justify-content: space-between; padding: 0 4px 0 1px; white-space: nowrap; font-size: 11.500px; letter-spacing: -.5px; }
.c-font { width: 97px; } .c-size { width: 43px; margin-left: -4px; letter-spacing: -.2px; } .c-gen { width: 128px; padding-left: 2px; letter-spacing: -.35px; }
.seg { height: 22px; border: 1px solid #9ab8de; border-radius: 3px; display: flex; background: linear-gradient(#d2e0f3 0, #c8d9f0 50%, #bfd3ee 51%, #d3e2f5); }
.seg i { font-style: normal; flex: 1; display: flex; align-items: center; justify-content: center; gap: 4px; border-right: 1px solid #b0c8e6; color: #111; }
.seg i:last-child { border-right: 0; }
.seg .on { background: linear-gradient(#f9cfa0 0, #fbb765 48%, #ffa846 50%, #ffe48c 90%); }
.s-grow { width: 45px; } .s-biu { width: 80px; } .s-bord { width: 35px; } .s-col { width: 67px; }
.s-biu i { font-size: 14.500px; flex: 0 0 23px; } .s-biu i:last-child { flex: 1; gap: 9px; }
.s-biu u { font-weight: bold; line-height: 19px; }
.bold { font-weight: bold; } .seg .ital { font-style: italic; font-weight: bold; }
.alignl { display: flex; flex-direction: column; gap: 7px; padding: 9px 0 0 3px; width: 124px; }
.s-3 { width: 69px; } .s-ori { width: 32px; } .s-2 { width: 45px; }
.s-ori i { gap: 1px; }
.ori { font: bold 11px "Liberation Serif", serif; }
.sep { width: 2px; height: 55px; margin-top: 6px; background: linear-gradient(to right, #9cb6d6 50%, #fff 50%); }
.alignr { padding: 8px 0 0 5px; display: flex; flex-direction: column; gap: 7px; }
.s-cur { width: 80px; } .s-dec { width: 45px; }
.s-cur i { flex: 0 0 22px; } .s-cur .dollar { font: bold 14px "Liberation Serif", serif; flex: 0 0 34px; gap: 10px; padding-left: 2px; } .s-cur .pct { font-size: 13px; line-height: 18px; }
.dec { font: bold 7.500px "Noto Sans", sans-serif; letter-spacing: -.1px; }
.bigs { padding: 5px 0 0; }
.w76 { width: 76px; } .w56 { width: 47px; } .w42 { width: 42px; }
.g-styles .w42 { width: 49px; }
.g-cells .bigs { padding-left: 2px; }
.big.w42 > span, .big.w56 > span, .big.w76 > span { margin-top: 4px; }
.bigs > .big > .dd { margin-top: 5px; }
.g-edit .stack { width: 85px; padding-left: 5px; }
.g-edit .cmd { gap: 4px; letter-spacing: -.25px; }
.g-edit .big { padding-top: 5px; }

.formula { height: 28px; display: grid; grid-template-columns: 159px 85px 1fr 16px; padding: 2px 0 4px; background: linear-gradient(#a9c3e6, #bcd3f1 2px, #b5cdec 24px, #d9e8fb 25px); color: #000; border-bottom: 1px solid #6a8fbf; }
.formula > div { border: solid #6a8fbf; border-width: 1px 0; background: #fff; height: 22px; line-height: 21px; font-size: 12.500px; }
.formula > .namebox { display: flex; align-items: center; border-left-width: 1px; }
.namebox > span { flex: 1; text-align: center; padding-right: 8px; }
.ndd { margin-right: 5px; margin-top: 2px; }
.formula > .fx { background: linear-gradient(#dbe8fa, #b0c8ea); border-left: 1px solid #6a8fbf; border-right: 1px solid #6a8fbf; border-radius: 11px 0 0 11px; }
.fxt { font: italic bold 14px "Liberation Serif", serif; fill: #555; } .fxs { font: italic bold 11px "Liberation Serif", serif; fill: #555; }
.finput { padding-left: 7px; display: flex; }
.finput > span { width: 241px; letter-spacing: .15px; }
.speck { width: 2px; height: 2px; margin-top: 6px; background: #5b5bf0; }
.formula > .expand { border: 1px solid #6a8fbf; background: linear-gradient(#d9e8fb, #a9c3e8); padding: 6px 3px; }

.sheet { position: relative; height: 522px; display: grid; grid-template-columns: 26px 1324px 16px; background: #fff; overflow: hidden; }
.sheet b { font-weight: normal; display: block; text-align: center; color: #27413e; font-size: 12px; height: 20px; line-height: 21px; }
.rowheads b { background: #e4ecf7; border: solid #9eb6ce; border-width: 0 1px 1px 0; }
.sheet .corner { background: #a9c4e9; }
.colheads { display: flex; height: 20px; }
.colheads b { flex: 0 0 64px; border: solid #9eb6ce; border-width: 0 1px 1px 0; background: linear-gradient(#f9fcfd, #d3dbe9); }
.colheads b:nth-child(1) { flex-basis: 124px; } .colheads b:nth-child(2) { flex-basis: 103px; } .colheads b:nth-child(3) { flex-basis: 108px; }
.colheads b:last-child { flex: 1; border-right: 0; }
.cells { overflow: hidden; }
.gridarea { height: 502px; background: repeating-linear-gradient(transparent 0 19px, #d0d7e5 19px 20px), repeating-linear-gradient(to right, #d0d7e5 0 1px, transparent 1px 64px) 14px 0; }
.left { width: 335px; height: 502px; background: repeating-linear-gradient(#fff 0 19px, #d0d7e5 19px 20px); display: flex; flex-direction: column; }
.blank { flex: 1; display: flex; } .blank i { border-right: 1px solid #d0d7e5; width: 124px; } .blank i:nth-child(2) { width: 103px; } .blank i:nth-child(3) { width: 108px; }
.data { border-collapse: separate; border-spacing: 0; width: 335px; table-layout: fixed; font: 14.300px "Liberation Serif", serif; color: #000; }
.data td { height: 20px; padding: 1px 0 0; line-height: 18px; text-align: center; border: solid #000; border-width: 0 1px 1px 0; }
.data td:nth-child(1) { width: 124px; } .data td:nth-child(2) { width: 103px; } .data td:nth-child(3) { width: 108px; }
.chart { position: absolute; font: 12px Lato, "Open Sans", sans-serif; overflow: hidden; }
.chart.bar { left: 40px; top: 192px; } .piea { left: 458px; top: 192px; } .pieb { left: 866px; top: 193px; }
.redf { fill: #c0504d; } .bluef { fill: #4f81bd; }
.mid { text-anchor: middle; } .end { text-anchor: end; }
.axis { text-anchor: start; font-weight: bold; } .ctitle { font-size: 22px; font-weight: bold; }
.c1 { fill: #4572a7; } .c2 { fill: #aa4643; } .c3 { fill: #89a54e; } .c4 { fill: #71588f; } .c5 { fill: #4198af; } .c6 { fill: #db843d; }

.sheetbar { height: 16px; background: linear-gradient(#7d9fcf, #a2bbe0 4px, #9db8df); display: flex; justify-content: space-between; }
.sheetbar svg { overflow: hidden; }
.st { font-size: 12.500px; fill: #2f4f86; } .act { font-weight: bold; fill: #15357c; }
.status { height: 22px; border-top: 1px solid #567db1; background: linear-gradient(#fff 0 1px, #dae8fb 1px, #c7dcf8 6px, #b3d0f5 7px, #d7e6f9 20px); display: flex; align-items: center; color: #15275c; }
.ready { width: 47px; padding-left: 7px; font-size: 11.500px; letter-spacing: -.35px; border-right: 1px solid #9bbbe3; height: 20px; line-height: 19px; }
.macro { width: 34px; height: 20px; padding: 2px 0 0 8px; border-right: 1px solid #9bbbe3; box-shadow: 1px 0 #fff; }
.zoom { margin-left: auto; background: linear-gradient(#b8d2f4, #a4c5f0 7px, #80abe3 8px, #b2cff3 20px); }
.zt { font-size: 11.500px; fill: #15275c; }

.taskbar { height: 40px; display: flex; align-items: center; padding: 1px 0 0 5px; background: linear-gradient(#0d1012 0 1px, #76858a 1px 2px, #2b3a42 2px, #0b1219 6px, #070c12 40px); color: #fff; }
.tb { width: 58px; height: 39px; display: flex; align-items: center; justify-content: center; margin-right: 4px; }
.tb:first-child { width: 44px; margin-right: 11px; }
.run { border: 1px solid #8d9193; border-radius: 3px; background: linear-gradient(160deg, #8f9496 0, #555a5d 38%, #2c3134 50%, #202427 100%); box-shadow: inset 0 0 1px #ccc; }
.tri { margin-left: auto; margin-right: 13px; }
.clock { width: 66px; display: flex; flex-direction: column; text-align: center; font-size: 12px; line-height: 17px; letter-spacing: -.45px; white-space: nowrap; margin-right: 1px; }
.showdesk { width: 14px; height: 38px; margin-left: 6px; border: 1px solid #7d8284; background: linear-gradient(160deg, #777 0, #222 40%, #0c1013 60%); }
```
